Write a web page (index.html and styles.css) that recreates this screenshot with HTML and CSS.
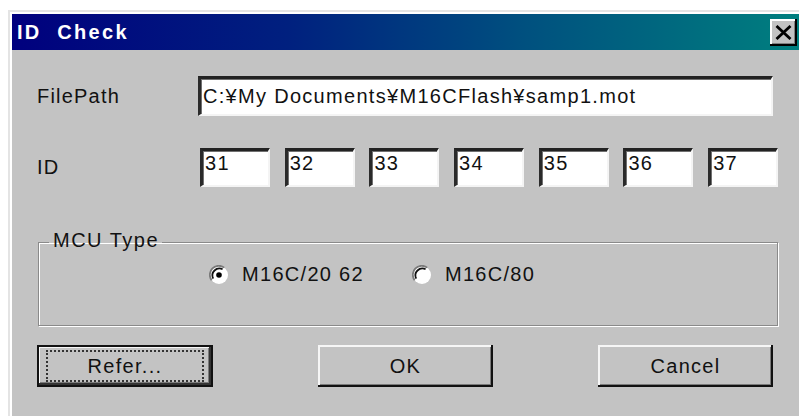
FILE: index.html
```html
<!DOCTYPE html>
<html lang="en">
<head>
<meta charset="utf-8">
<title>ID Check</title>
<link rel="stylesheet" href="styles.css">
</head>
<body>
<div class="window">
  <div class="titlebar">
    <span class="title">ID&nbsp; Check</span>
    <button class="close" type="button" aria-label="Close">
      <svg width="17" height="15" viewBox="0 0 17 15"><path d="M1.5 1 L15.5 14 M15.5 1 L1.5 14" stroke="#000" stroke-width="2.8" fill="none"/></svg>
    </button>
  </div>
  <div class="content">
    <div class="row path-row">
      <label class="label">FilePath</label>
      <div class="field path-field">C:¥My Documents¥M16CFlash¥samp1.mot</div>
    </div>
    <div class="row id-row">
      <label class="label">ID</label>
      <div class="ids">
        <div class="field id-field">31</div>
        <div class="field id-field">32</div>
        <div class="field id-field">33</div>
        <div class="field id-field">34</div>
        <div class="field id-field">35</div>
        <div class="field id-field">36</div>
        <div class="field id-field">37</div>
      </div>
    </div>
    <fieldset class="group">
      <legend class="legend">MCU Type</legend>
      <div class="radios">
        <div class="radio">
          <svg class="radio-dot" width="20" height="20" viewBox="0 0 20 20">
            <circle cx="10" cy="10" r="9" fill="#fff"/>
            <path d="M2.6 15.2 A9 9 0 0 1 15.2 2.6" stroke="#7a7a7a" stroke-width="1.8" fill="none"/>
            <path d="M4.2 13.6 A7 7 0 0 1 13.6 4.2" stroke="#111" stroke-width="1.8" fill="none"/>
            <circle cx="10" cy="10" r="2.8" fill="#000"/>
          </svg>
          <span>M16C/20 62</span>
        </div>
        <div class="radio">
          <svg class="radio-dot" width="20" height="20" viewBox="0 0 20 20">
            <circle cx="10" cy="10" r="9" fill="#fff"/>
            <path d="M2.6 15.2 A9 9 0 0 1 15.2 2.6" stroke="#7a7a7a" stroke-width="1.8" fill="none"/>
            <path d="M4.2 13.6 A7 7 0 0 1 13.6 4.2" stroke="#111" stroke-width="1.8" fill="none"/>
          </svg>
          <span>M16C/80</span>
        </div>
      </div>
    </fieldset>
    <div class="buttons">
      <button class="btn default" type="button"><span class="focus">Refer...</span></button>
      <button class="btn" type="button">OK</button>
      <button class="btn" type="button">Cancel</button>
    </div>
  </div>
</div>
</body>
</html>
```
FILE: styles.css
```css
html, body {
  margin: 0;
  padding: 0;
  background: #fff;
  overflow: hidden;
  width: 799px;
  height: 419px;
}

body {
  font-family: "Liberation Sans", Arial, sans-serif;
  font-size: 20px;
  color: #111;
}

/* dialog frame */
.window {
  margin: 10px 0 0 8px;
  width: 806px;
  height: 406px;
  background: #c3c3c3;
  border-top: 2px solid #e4e4e4;
  border-left: 2px solid #e4e4e4;
  box-shadow: inset 2px 2px 0 #fff;
  padding: 2px 0 0 2px;
  box-sizing: border-box;
  display: flex;
  flex-direction: column;
}

.titlebar {
  height: 36px;
  width: 787px;
  flex: none;
  display: flex;
  align-items: center;
  justify-content: space-between;
  background: linear-gradient(to right, #00007e 0%, #00207f 35%, #00507f 65%, #007f7f 100%);
  padding: 0 0 0 5px;
  box-sizing: border-box;
}

.title {
  color: #fff;
  font-weight: bold;
  font-size: 20px;
  letter-spacing: 2.3px;
}

.close {
  width: 27px;
  height: 27px;
  margin-right: 2px;
  padding: 0;
  background: #c3c3c3;
  border: none;
  box-shadow: inset -2px -2px 0 #000, inset 2px 2px 0 #fff, inset -3px -3px 0 #808080;
  display: flex;
  align-items: center;
  justify-content: center;
}

.content {
  padding: 26px 0 0 25px;
  display: flex;
  flex-direction: column;
}

.row {
  display: flex;
  align-items: center;
}

.label {
  width: 161px;
  flex: none;
  letter-spacing: 1.2px;
}

/* sunken edit boxes */
.field {
  background: #fff;
  box-sizing: border-box;
  border-style: solid;
  border-width: 3px 2px 2px 3px;
  border-color: #222 #f4f4f4 #f4f4f4 #2a2a2a;
  box-shadow: inset 1px 1px 0 #707070;
  padding: 2px 0 0 2px;
  letter-spacing: 1.3px;
  line-height: 24px;
  white-space: nowrap;
  overflow: hidden;
}

.path-field {
  width: 575px;
  height: 40px;
  padding-top: 5px;
}

.id-row {
  margin-top: 32px;
  align-items: flex-start;
}

.id-row .label {
  padding-top: 8px;
}

.ids {
  display: flex;
  gap: 14.7px;
  padding-left: 2px;
}

.id-field {
  width: 70px;
  height: 39px;
  padding-top: 0;
}

/* etched group box */
.group {
  margin: 45px 0 0 1px;
  width: 740px;
  height: 94px;
  box-sizing: border-box;
  border: 1px solid #8a8a8a;
  box-shadow: 1px 1px 0 #fff, inset 1px 1px 0 #fff;
  padding: 0;
}

.legend {
  margin-left: 10px;
  padding: 0 3px 0 4px;
  letter-spacing: 1.5px;
  line-height: 20px;
  position: relative;
  top: -2px;
}

.radios {
  display: flex;
  gap: 48px;
  padding: 11px 0 0 170px;
}

.radio {
  display: flex;
  align-items: center;
  gap: 13px;
  letter-spacing: 1.3px;
}

.radio-dot {
  flex: none;
}

.buttons {
  display: flex;
  margin-top: 19px;
}

/* raised push buttons */
.btn {
  width: 175px;
  height: 42px;
  font-family: "Liberation Sans", Arial, sans-serif;
  font-size: 20px;
  letter-spacing: 1.3px;
  color: #111;
  background: #c3c3c3;
  border: none;
  padding: 0;
  box-shadow: inset -2px -2px 0 #111, inset 2px 2px 0 #f6f6f6, inset -3px -3px 0 #7a7a7a;
  display: flex;
  align-items: center;
  justify-content: center;
}

.btn + .btn {
  margin-left: 105px;
}

.default {
  width: 176px;
  box-shadow: inset 0 0 0 2px #111, inset -4px -4px 0 #333, inset 3px 3px 0 #f6f6f6, inset -5px -5px 0 #7a7a7a;
}

.focus {
  display: flex;
  align-items: center;
  justify-content: center;
  box-sizing: border-box;
  width: 158px;
  height: 32px;
  border: 2px dotted #333;
}
```
